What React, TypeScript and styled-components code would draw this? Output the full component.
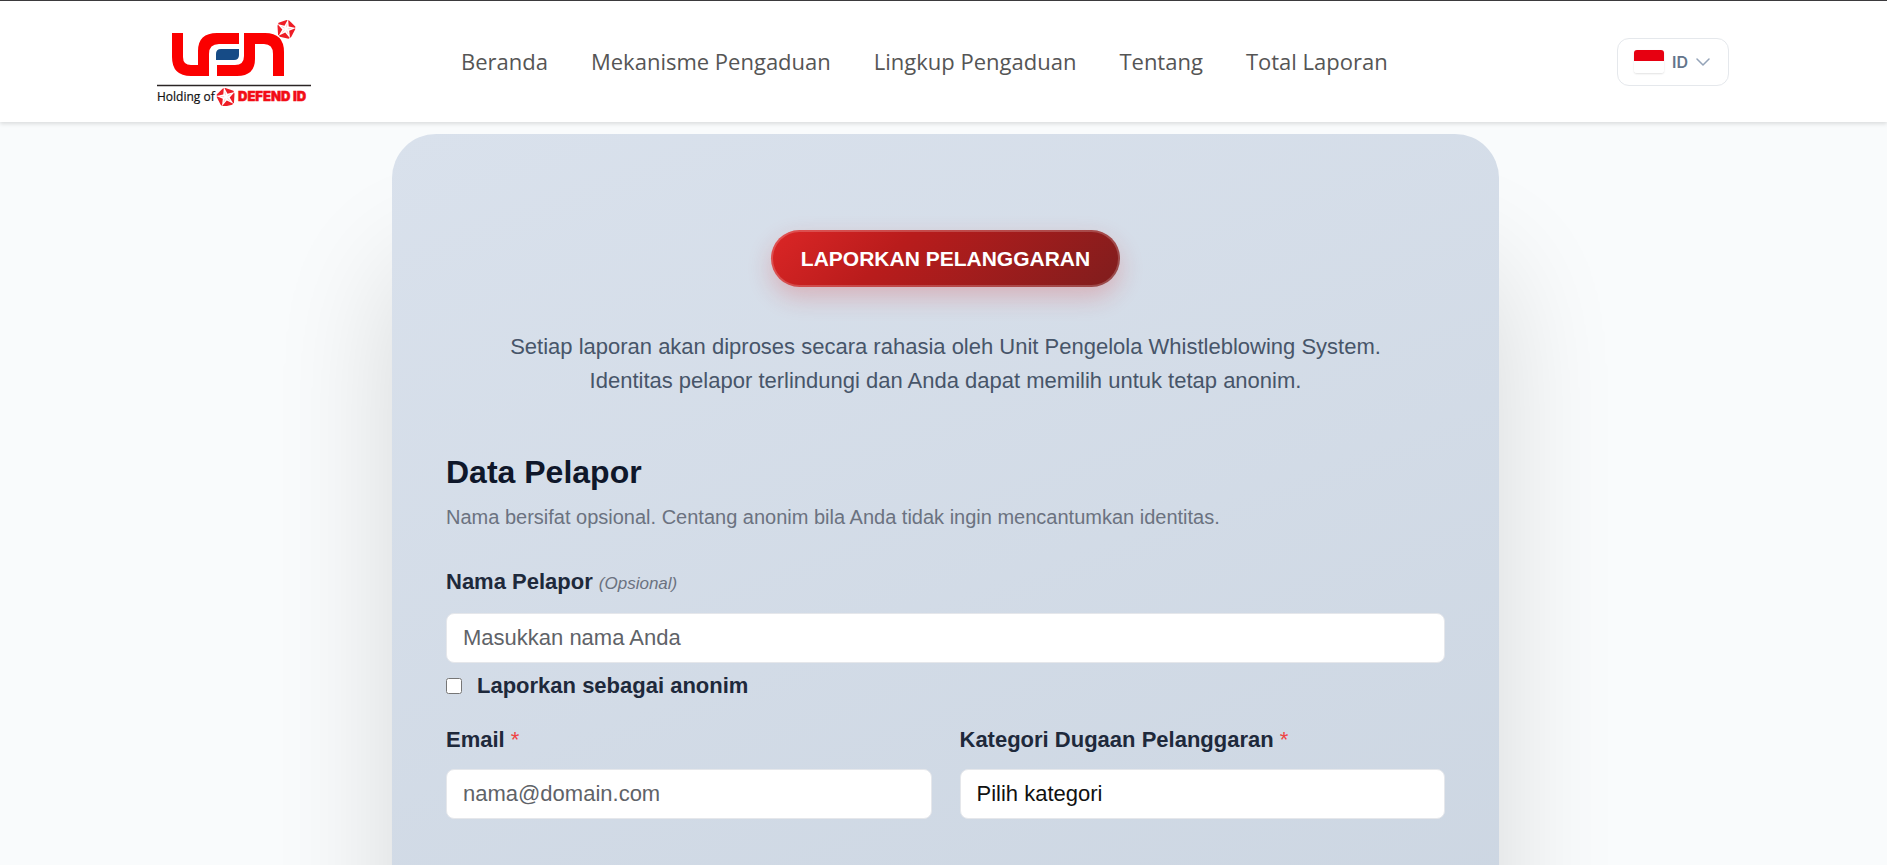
import React from "react";
import styled, { createGlobalStyle } from "styled-components";

const sans = `"Liberation Sans", Arial, sans-serif`;

const GlobalStyle = createGlobalStyle`
  *, *::before, *::after { box-sizing: border-box; }
  html, body { margin: 0; }
  body { background: #f9fbfc; font-family: ${sans}; color: #1e293b; }
`;

const Page = styled.div`
  height: 100vh;
  display: flex;
  flex-direction: column;
  overflow: hidden;
`;

const Header = styled.header`
  flex: none;
  position: relative;
  z-index: 1;
  height: 122px;
  padding: 0 158px 0 157px;
  display: flex;
  align-items: center;
  background: #fff;
  border-top: 1px solid #3b3a3d;
  box-shadow: 0 2px 4px rgba(0, 0, 0, 0.12);
`;

const Brand = styled.a`
  display: block;
  flex: none;
  line-height: 0;
`;

const Nav = styled.nav`
  display: flex;
  gap: 43px;
  margin-left: 150px;
  padding-bottom: 2px;
`;

const NavLink = styled.a`
  font: 400 22px/32px "Open Sans", sans-serif;
  color: #555;
  text-decoration: none;
  white-space: nowrap;
`;

const LanguageButton = styled.button`
  margin-left: auto;
  height: 48px;
  padding: 0 18px 0 16px;
  display: flex;
  align-items: center;
  gap: 8px;
  border: 1px solid #e5e8ec;
  border-radius: 12px;
  background: #fff;
  color: #64748b;
  font: 600 16px/24px Inter, sans-serif;
`;

const Flag = styled.span`
  width: 30px;
  height: 23px;
  border-radius: 3px;
  background: linear-gradient(#e70011 50%, #fff 50%);
  box-shadow: 0 1px 2px rgba(0, 0, 0, 0.12);
`;

const Main = styled.main`
  flex: 1;
  padding: 12px 0 0 4px;
`;

const Card = styled.section`
  max-width: 1107px;
  margin: 0 auto;
  padding: 96px 54px 240px;
  border-radius: 44px;
  background: linear-gradient(160deg, #d9e1ec 0%, #cbd5e1 100%);
  box-shadow: 0 130px 120px rgba(0, 0, 0, 0.14);
`;

const Intro = styled.div`
  display: flex;
  flex-direction: column;
  align-items: center;
  gap: 43px;
  text-align: center;
`;

const ReportTitle = styled.h1`
  margin: 0;
  height: 57px;
  padding: 0 30px;
  display: flex;
  align-items: center;
  border-radius: 29px;
  background: linear-gradient(135deg, #dc2626 0%, #b91c1c 35%, #7f1d1d 100%);
  box-shadow: 0 10px 24px rgba(220, 38, 38, 0.24), inset 0 0 0 2px rgba(255, 255, 255, 0.2);
  color: #fff;
  font-size: 21px;
  font-weight: 700;
`;

const Lead = styled.p`
  margin: 0;
  font-size: 22px;
  line-height: 34px;
  color: #475569;
`;

const Form = styled.form`
  margin-top: 54px;
`;

const SectionTitle = styled.h2`
  margin: 0;
  font-size: 32px;
  line-height: 40px;
  color: #0f172a;
`;

const Hint = styled.p`
  margin: 10px 0 0;
  font-size: 20px;
  line-height: 30px;
  color: #6b7280;
`;

const Row = styled.div<{ $columns?: number }>`
  display: grid;
  grid-template-columns: repeat(${(p) => p.$columns ?? 1}, 1fr);
  gap: 28px;
`;

const Field = styled.div`
  display: flex;
  flex-direction: column;
  gap: 13px;
`;

const Label = styled.label`
  font-size: 22px;
  line-height: 32px;
  font-weight: 700;
  color: #1e293b;
`;

const Optional = styled.em`
  font-size: 17px;
  font-weight: 400;
  color: #6b7280;
`;

const Required = styled.span`
  font-weight: 400;
  color: #ef4444;
`;

const control = `
  width: 100%;
  height: 50px;
  padding: 0 16px;
  border: 1px solid #e5e7eb;
  border-radius: 8px;
  background: #fff;
  font: 400 22px/32px ${sans};
  color: #111;
  appearance: none;
`;

const Input = styled.input`
  ${control}
  &::placeholder { color: #5f6368; opacity: 1; }
`;

const Select = styled.select`
  ${control}
`;

const CheckRow = styled.div`
  display: flex;
  align-items: center;
  gap: 15px;
  margin: 7px 0 22px;
`;

const Checkbox = styled.input`
  width: 16px;
  height: 16px;
  margin: 0;
`;

const Body = styled.div`
  margin-top: 34px;
`;

const links = ["Beranda", "Mekanisme Pengaduan", "Lingkup Pengaduan", "Tentang", "Total Laporan"];

function Star({ x, y, size, turn = 0 }: { x: number; y: number; size: number; turn?: number }) {
  return (
    <g transform={`translate(${x} ${y}) rotate(${turn}) scale(${size / 20})`}>
      <path d="M-1.500-10H1.500L9.500-5 10-1.500 7.500 7.500 5 10H-5L-7.500 7.500-10-1.500-9.500-5Z" fill="#ee1c25" />
      <path d="M0-11 2.400-3.300 10.500-3.400 3.900 1.300 6.500 9 0 4.100-6.500 9-3.900 1.300-10.500-3.400-2.400-3.300Z" fill="#fff" />
      <path d="M0-6V-2M5.700-1.900 1.900-.6M3.500 4.900 1.200 1.600M-3.500 4.900-1.200 1.600M-5.700-1.900-1.900-.6" stroke="#ee1c25" strokeOpacity=".35" strokeWidth=".6" />
    </g>
  );
}

function Logo() {
  return (
    <svg width="154" height="88" viewBox="0 0 154 88" role="img" aria-label="LEN">
      <g fill="#fb0000">
        <path d="M15 15H26V39Q26 47 34 47H41V33Q41 15 60 15H82V26H62Q52 26 52 36V58H34Q15 58 15 39Z" />
        <path d="M87 15H108Q127 15 127 34V58H116V36Q116 26 107 26H98V41Q98 58 80 58H60V47H78Q87 47 87 38Z" />
      </g>
      <path d="M64 31H82V37Q82 42 77 42H59V36Q59 31 64 31Z" fill="#164b86" />
      <Star x={129} y={11} size={18} turn={12} />
      <path d="M0 67.500H154" stroke="#2b2525" strokeWidth="1.500" />
      <text x="0" y="83" fontFamily="Open Sans, sans-serif" fontSize="12" fontWeight="500" fill="#111" stroke="#111" strokeWidth=".2">Holding of</text>
      <Star x={69} y={79} size={18} turn={-12} />
      <text x="81" y="83" fontFamily="Inter, sans-serif" fontSize="13" fontWeight="900" fill="#f20d16" stroke="#f20d16" strokeWidth=".5">DEFEND ID</text>
    </svg>
  );
}

function Chevron() {
  return (
    <svg width="14" height="8" viewBox="0 0 14 8" fill="none" stroke="#94a3b8" strokeWidth="1.500" strokeLinecap="round" strokeLinejoin="round" aria-hidden="true">
      <path d="M1 1 7 7 13 1" />
    </svg>
  );
}

export default function App() {
  return (
    <Page>
      <GlobalStyle />
      <Header>
        <Brand href="#" aria-label="LEN, Holding of DEFEND ID"><Logo /></Brand>
        <Nav>
          {links.map((text) => <NavLink key={text} href="#">{text}</NavLink>)}
        </Nav>
        <LanguageButton type="button"><Flag />ID<Chevron /></LanguageButton>
      </Header>
      <Main>
        <Card>
          <Intro>
            <ReportTitle>LAPORKAN PELANGGARAN</ReportTitle>
            <Lead>
              Setiap laporan akan diproses secara rahasia oleh Unit Pengelola Whistleblowing System.
              <br />
              Identitas pelapor terlindungi dan Anda dapat memilih untuk tetap anonim.
            </Lead>
          </Intro>
          <Form>
            <SectionTitle>Data Pelapor</SectionTitle>
            <Hint>Nama bersifat opsional. Centang anonim bila Anda tidak ingin mencantumkan identitas.</Hint>
            <Body>
              <Field>
                <Label htmlFor="name">Nama Pelapor <Optional>(Opsional)</Optional></Label>
                <Input id="name" type="text" placeholder="Masukkan nama Anda" />
              </Field>
              <CheckRow>
                <Checkbox id="anonymous" type="checkbox" />
                <Label htmlFor="anonymous">Laporkan sebagai anonim</Label>
              </CheckRow>
              <Row $columns={2}>
                <Field>
                  <Label htmlFor="email">Email <Required>*</Required></Label>
                  <Input id="email" type="email" placeholder="nama@domain.com" />
                </Field>
                <Field>
                  <Label htmlFor="category">Kategori Dugaan Pelanggaran <Required>*</Required></Label>
                  <Select id="category"><option>Pilih kategori</option></Select>
                </Field>
              </Row>
            </Body>
          </Form>
        </Card>
      </Main>
    </Page>
  );
}
